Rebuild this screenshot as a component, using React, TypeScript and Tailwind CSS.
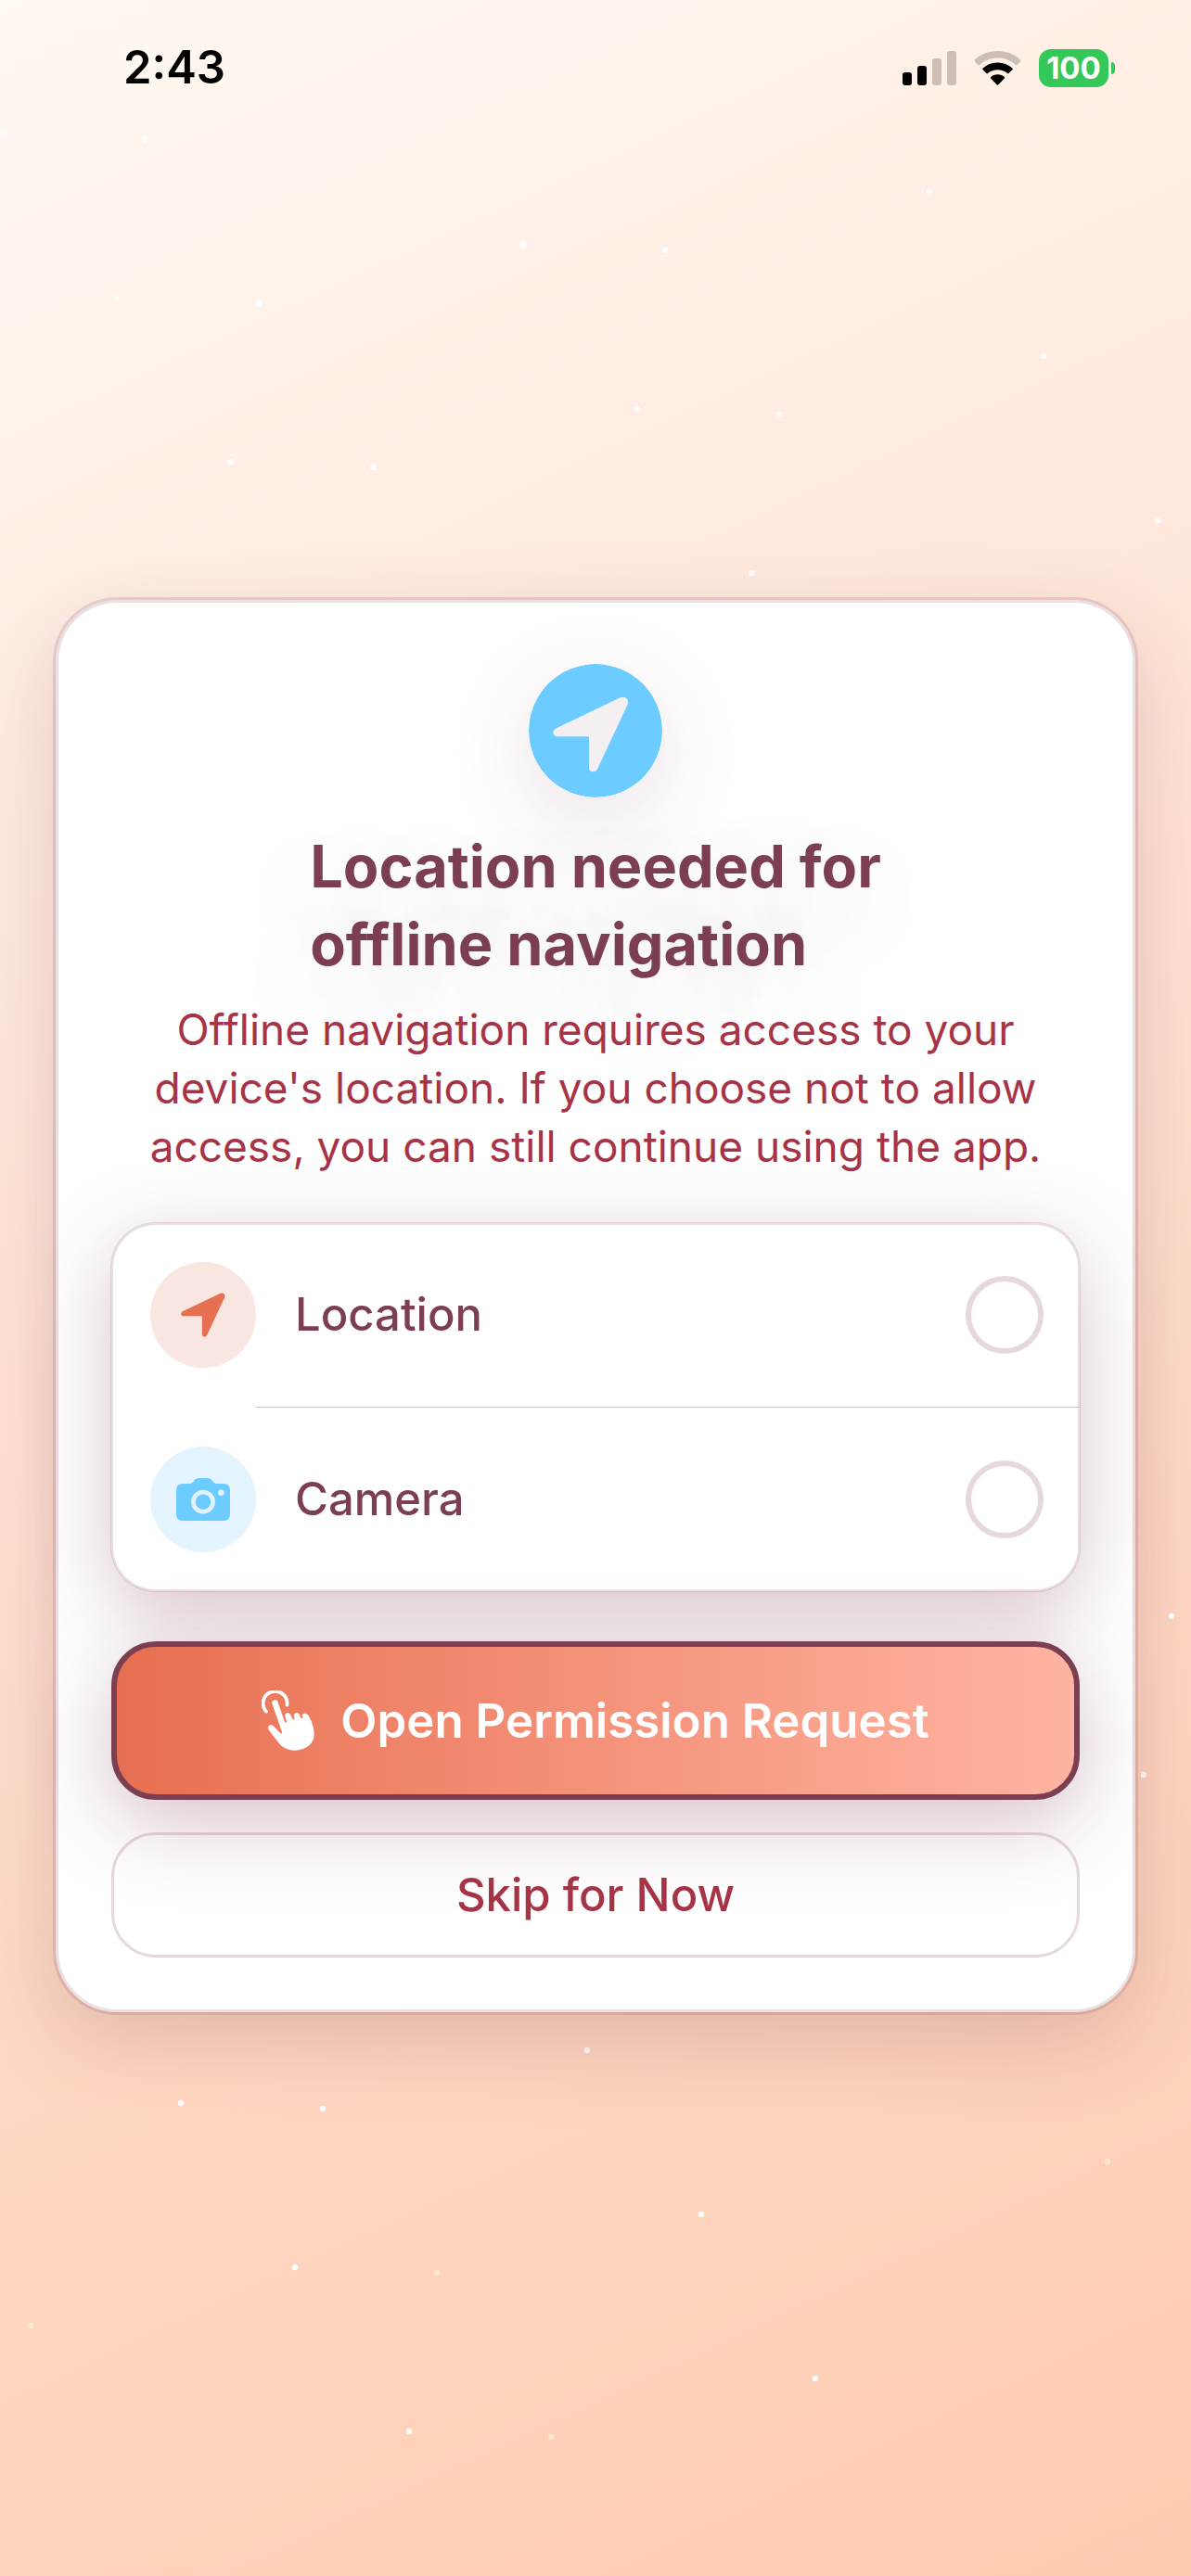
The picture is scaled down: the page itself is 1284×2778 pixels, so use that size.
import React from 'react';

const STARS = [
    { x: 2, y: 144, faint: false },
    { x: 156, y: 150, faint: false },
    { x: 1002, y: 207, faint: false },
    { x: 564, y: 264, faint: false },
    { x: 717, y: 270, faint: false },
    { x: 126, y: 321, faint: false },
    { x: 279, y: 327, faint: false },
    { x: 1125, y: 384, faint: false },
    { x: 687, y: 441, faint: false },
    { x: 840, y: 447, faint: false },
    { x: 249, y: 498, faint: false },
    { x: 402, y: 504, faint: false },
    { x: 1248, y: 561, faint: false },
    { x: 810, y: 618, faint: false },
    { x: 18, y: 1326, faint: true },
    { x: 1263, y: 1743, faint: false },
    { x: 1233, y: 1914, faint: false },
    { x: 633, y: 2211, faint: false },
    { x: 195, y: 2268, faint: false },
    { x: 348, y: 2274, faint: false },
    { x: 1194, y: 2331, faint: true },
    { x: 756, y: 2388, faint: false },
    { x: 318, y: 2445, faint: false },
    { x: 471, y: 2451, faint: true },
    { x: 33, y: 2508, faint: true },
    { x: 879, y: 2565, faint: false },
    { x: 441, y: 2622, faint: false },
    { x: 594, y: 2628, faint: true },
];

const ARROW_PATH =
    'M98 36.6 L30 69.3 C24.5 72 25.5 78.2 31 78.2 H63.5 Q65 78.2 65 79.7 V111.5 C65 117.5 72 117.8 74.2 113 L106.3 44.5 C109 38.5 104.5 33.5 98 36.6 Z';

function StarField() {
    return (
        <svg className="absolute inset-0 w-full h-full" viewBox="0 0 1284 2778" preserveAspectRatio="xMidYMin slice" aria-hidden="true">
            {STARS.map((star) => (
                <circle key={`${star.x}-${star.y}`} cx={star.x} cy={star.y} r="3.2" fill={star.faint ? '#ffe8d2' : '#ffffff'} />
            ))}
        </svg>
    );
}

function StatusBar() {
    return (
        <header className="relative flex items-start justify-between h-[141px] pl-[133px] pr-[82px] pt-[42px]">
            <span className="text-[49px] leading-[62px] font-semibold text-black">2:43</span>
            <div className="flex items-center h-[62px]">
                <svg className="w-[58px] h-[37px]" viewBox="0 0 58 37" aria-hidden="true">
                    <rect x="0" y="23" width="10" height="14" rx="3" fill="#000" />
                    <rect x="16" y="16" width="10" height="21" rx="3" fill="#000" />
                    <rect x="32" y="8" width="10" height="29" rx="3" fill="#cdbfb8" />
                    <rect x="48" y="0" width="10" height="37" rx="3" fill="#cdbfb8" />
                </svg>
                <svg className="ml-[19px] w-[51px] h-[37px]" viewBox="0 0 51 37" aria-hidden="true">
                    <path d="M25.5 0 C35.5 0 44 3.7 50.2 9.6 Q51 10.4 50.2 11.3 L46.6 15 Q45.8 15.8 45 15 C39.6 10.2 33 7.6 25.5 7.6 C18 7.6 11.4 10.2 6 15 Q5.2 15.8 4.4 15 L0.8 11.3 Q0 10.4 0.8 9.6 C7 3.7 15.5 0 25.5 0 Z" fill="#cdbfb8" />
                    <path d="M25.5 12.6 C31.8 12.6 37.2 14.8 41.3 18.5 Q42.3 19.4 41.4 20.3 L37.6 24 Q36.8 24.8 36 24 C33 21.6 29.5 20.3 25.5 20.3 C21.5 20.3 18 21.6 15 24 Q14.2 24.8 13.4 24 L9.6 20.3 Q8.7 19.4 9.7 18.5 C13.8 14.8 19.2 12.6 25.5 12.6 Z" fill="#000" />
                    <path d="M25.5 25.3 C28.4 25.3 30.9 26.2 32.7 27.7 Q33.7 28.6 32.8 29.5 L26.4 36.2 Q25.5 37.1 24.6 36.2 L18.2 29.5 Q17.3 28.6 18.3 27.7 C20.1 26.2 22.6 25.3 25.5 25.3 Z" fill="#000" />
                </svg>
                <div className="ml-[19px] flex items-center">
                    <span className="flex items-center justify-center w-[75px] h-[41px] rounded-[13px] bg-[#34c759] text-white text-[33px] leading-none font-bold">100</span>
                    <span className="ml-[3px] w-1 h-[13px] rounded-r-full bg-[#34c759]" />
                </div>
            </div>
        </header>
    );
}

function ArrowIcon() {
    return (
        <svg className="w-12 h-12" viewBox="26 35 82 82" aria-hidden="true">
            <path d={ARROW_PATH} fill="#e76f51" />
        </svg>
    );
}

function CameraIcon() {
    return (
        <svg className="w-[58px] h-[46px]" viewBox="0 0 58 46" aria-hidden="true">
            <path d="M7 6 H14.5 Q16.5 6 18 4.2 L20 1.8 Q21.5 0 24 0 H34 Q36.5 0 38 1.8 L40 4.2 Q41.5 6 43.5 6 H51 Q58 6 58 13 V39 Q58 46 51 46 H7 Q0 46 0 39 V13 Q0 6 7 6 Z" fill="#6cccff" />
            <circle cx="29" cy="25.7" r="10.6" fill="none" stroke="#e3f1fa" strokeWidth="4.6" />
            <circle cx="48.3" cy="15.8" r="3.3" fill="#e3f1fa" />
        </svg>
    );
}

function TapIcon() {
    return (
        <svg className="w-[57px] h-[65px]" viewBox="66 71 171 195" aria-hidden="true">
            <path d="M81 139 A39 39 0 1 1 148.500 118" fill="none" stroke="#fff" strokeWidth="11" strokeLinecap="round" />
            <path
                d="M100 113 C98 102 115 97 119 109 L140 171 C142 177 149 176 147 170 L142 155 C139 145 154 139 160 149 L165 162 C168 167 174 165 172 160 L170 153 C170 143 184 140 189 149 L192 158 C194 163 200 162 199 157 L197 150 C202 142 213 144 218 153 C227 168 236 190 236 213 C236 244 208 265 173 265 C146 265 129 253 116 234 L88 197 C83 187 95 178 104 186 L126 208 C130 212 134 210 132 205 Z"
                fill="#fff"
            />
        </svg>
    );
}

interface PermissionRowProps {
    label: string;
    tint: string;
    icon: React.ReactNode;
}

function PermissionRow({ label, tint, icon }: PermissionRowProps) {
    return (
        <label className="flex items-center py-[42px] pl-[42px] pr-[39px]">
            <span className={`flex items-center justify-center w-[114px] h-[114px] rounded-full ${tint}`}>{icon}</span>
            <span className="ml-[42px] flex-1 text-[49px] leading-[60px] font-medium text-[#7c3f52]">{label}</span>
            <input type="checkbox" className="appearance-none w-[84px] h-[84px] rounded-full border-[6px] border-[#e5d9dd]" />
        </label>
    );
}

export default function App() {
    return (
        <div className="relative min-h-screen flex flex-col overflow-hidden font-['Inter',sans-serif] bg-[linear-gradient(155deg,#fff9f2_0%,#ffe7db_35%,#fed9c4_65%,#ffcbb1_100%)]">
            <StarField />
            <StatusBar />
            <main className="relative flex-1 flex flex-col justify-center px-[60px] pb-[102px]">
                <section className="flex flex-col rounded-[66px] bg-white px-[60px] pt-[69px] pb-[59px] shadow-[inset_0_0_0_3px_rgba(124,63,82,0.16),0_0_0_3px_rgba(124,63,82,0.16),0_30px_90px_rgba(124,63,82,0.22)]">
                    <div className="flex flex-col items-center">
                        <svg className="w-36 h-36 rounded-full shadow-[0_24px_90px_rgba(124,63,82,0.16)]" viewBox="0 0 144 144" aria-hidden="true">
                            <circle cx="72" cy="72" r="72" fill="#6cccff" />
                            <path d={ARROW_PATH} fill="#f4f0f2" />
                        </svg>
                        <h1 className="mt-8 text-[63px] leading-[84px] font-bold text-[#7c3f52] [text-shadow:0_30px_120px_rgba(124,63,82,0.24)]">
                            Location needed for
                            <br />
                            offline navigation
                        </h1>
                        <p className="mt-[19px] px-9 text-center text-[46px] leading-[63px] text-[#a63446] [text-shadow:0_24px_120px_rgba(124,63,82,0.16)]">
                            Offline navigation requires access to your device's location. If you choose not to allow access, you can still continue using the app.
                        </p>
                    </div>

                    <div className="mt-[51px] rounded-[48px] bg-white shadow-[0_0_0_1px_rgba(124,63,82,0.18),inset_0_0_0_2px_rgba(124,63,82,0.16),0_24px_90px_rgba(124,63,82,0.3)]">
                        <PermissionRow label="Location" tint="bg-[#f9e6e0]" icon={<ArrowIcon />} />
                        <div className="ml-[156px] h-px bg-[#c6c6c8]" />
                        <PermissionRow label="Camera" tint="bg-[#e4f4fe]" icon={<CameraIcon />} />
                    </div>

                    <button className="mt-[54px] flex items-center justify-center gap-7 h-[171px] rounded-[48px] border-[6px] border-[#7c3f52] bg-linear-to-r from-[#e76f51] to-[#ffb4a2] text-white text-[51px] leading-[60px] font-semibold shadow-[0_24px_90px_rgba(124,63,82,0.32)]">
                        <TapIcon />
                        Open Permission Request
                    </button>
                    <button className="mt-[35px] h-[135px] rounded-[48px] border-[3px] border-[#7c3f52]/20 text-[#a63446] text-[49px] leading-[60px] font-medium">
                        Skip for Now
                    </button>
                </section>
            </main>
        </div>
    );
}
